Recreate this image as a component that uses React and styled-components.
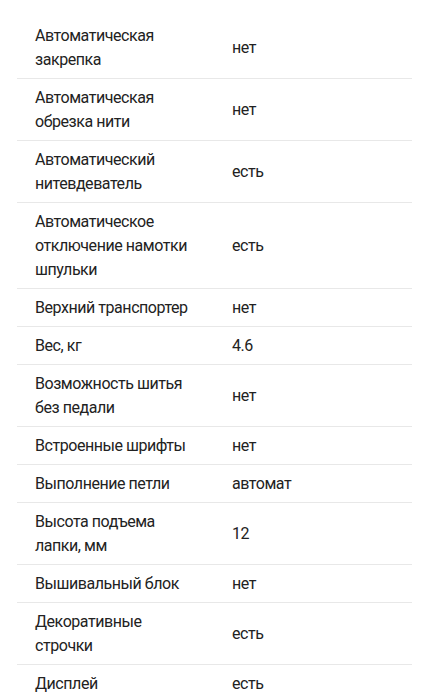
import React from 'react';
import styled, { createGlobalStyle } from 'styled-components';

const GlobalStyle = createGlobalStyle`
  body {
    margin: 0;
    background: #fff;
    font-family: Roboto, "Noto Sans", sans-serif;
  }
`

const Page = styled.div`
  padding: 17px 14px 0 17px;
`

const SpecRow = styled.div`
  display: grid;
  grid-template-columns: 215px 1fr;
  align-items: center;
  padding: 7px 0 6px;
  border-bottom: 1px solid #e8e8e8;
  font-size: 16px;
  line-height: 24px;
  letter-spacing: -0.45px;
  color: #222;
`

const Label = styled.div`
  padding: 0 30px 0 18px;
`

const Value = styled.div`
  padding-right: 12px;
`

const specs = [
  ['Автоматическая закрепка', 'нет'],
  ['Автоматическая обрезка нити', 'нет'],
  ['Автоматический нитевдеватель', 'есть'],
  ['Автоматическое отключение намотки шпульки', 'есть'],
  ['Верхний транспортер', 'нет'],
  ['Вес, кг', '4.6'],
  ['Возможность шитья без педали', 'нет'],
  ['Встроенные шрифты', 'нет'],
  ['Выполнение петли', 'автомат'],
  ['Высота подъема лапки, мм', '12'],
  ['Вышивальный блок', 'нет'],
  ['Декоративные строчки', 'есть'],
  ['Дисплей', 'есть'],
]

const App = () => {
  return (
    <>
      <GlobalStyle />
      <Page>
        {specs.map(([label, value]) => (
          <SpecRow key={label}>
            <Label>{label}</Label>
            <Value>{value}</Value>
          </SpecRow>
        ))}
      </Page>
    </>
  )
}

export default App
